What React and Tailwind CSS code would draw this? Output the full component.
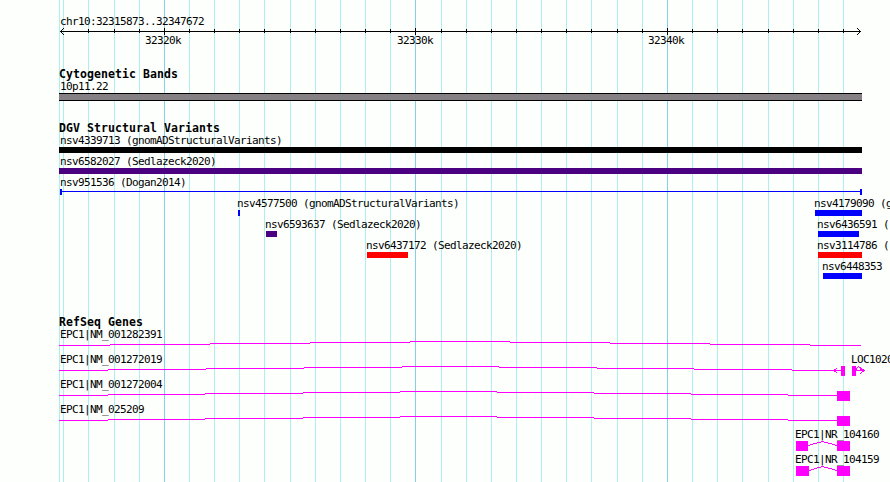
const MINOR_LINES = [
  59, 63, 88, 114, 139, 189, 214, 239, 264, 290, 315, 340, 365, 390, 441, 466, 491, 516, 541, 566, 591, 617, 642,
  692, 717, 742, 768, 793, 818, 843,
]
const MAJOR_LINES = [164, 415, 667]

const AXIS_LABELS = [
  { text: "32320k", x: 145 },
  { text: "32330k", x: 397 },
  { text: "32340k", x: 648 },
]

const VARIANT_ROWS = [
  [{ name: "nsv4339713 (gnomADStructuralVariants)", labelX: 60, x: 59, width: 803, color: "bg-black" }],
  [{ name: "nsv6582027 (Sedlazeck2020)", labelX: 60, x: 59, width: 803, color: "bg-[#4b0082]" }],
  [{ name: "nsv951536 (Dogan2014)", labelX: 60, x: 60, width: 802, span: true }],
  [
    { name: "nsv4577500 (gnomADStructuralVariants)", labelX: 237, x: 238, width: 2, color: "bg-[#0000ff]" },
    { name: "nsv4179090 (g", labelX: 814, x: 815, width: 47, color: "bg-[#0000ff]" },
  ],
  [
    { name: "nsv6593637 (Sedlazeck2020)", labelX: 265, x: 266, width: 11, color: "bg-[#4b0082]" },
    { name: "nsv6436591 (", labelX: 817, x: 818, width: 41, color: "bg-[#0000ff]" },
  ],
  [
    { name: "nsv6437172 (Sedlazeck2020)", labelX: 366, x: 367, width: 41, color: "bg-[#ff0000]" },
    { name: "nsv3114786 (", labelX: 817, x: 818, width: 44, color: "bg-[#ff0000]" },
  ],
  [{ name: "nsv6448353", labelX: 822, x: 823, width: 39, color: "bg-[#0000ff]" }],
]

// intron: x of each one pixel step along the connector
const GENE_ROWS = [
  {
    labels: [{ text: "EPC1|NM_001282391", x: 60 }],
    intron: [59, 110, 210, 310, 410, 510, 610, 710, 810, 861],
    exons: [],
  },
  {
    labels: [
      { text: "EPC1|NM_001272019", x: 60 },
      { text: "LOC1020", x: 851 },
    ],
    intron: [59, 108, 206, 304, 402, 499, 597, 694, 792, 841],
    exons: [
      [841, 4],
      [852, 4],
    ],
    arrows: true,
  },
  {
    labels: [{ text: "EPC1|NM_001272004", x: 60 }],
    intron: [59, 108, 205, 303, 400, 497, 594, 691, 788, 837],
    exons: [[837, 13]],
  },
  {
    labels: [{ text: "EPC1|NM_025209", x: 60 }],
    intron: [59, 108, 205, 303, 400, 497, 594, 691, 788, 837],
    exons: [[837, 13]],
  },
  {
    labels: [{ text: "EPC1|NR_104160", x: 795 }],
    exons: [
      [796, 12],
      [837, 13],
    ],
    hat: 808,
  },
  {
    labels: [{ text: "EPC1|NR_104159", x: 795 }],
    exons: [
      [796, 13],
      [837, 13],
    ],
    hat: 809,
  },
]

const STEP_Y = [4, 3, 2, 1, 0, 1, 2, 3, 4]

const Label = ({ x, children }) => (
  <span
    className="absolute top-0 text-[11px] leading-[13px] tracking-[-0.622px] whitespace-pre"
    style={{ left: x }}
  >
    {children}
  </span>
)

const Heading = ({ children }) => (
  <h2 className="h-3 pl-[59px] text-[11.5px] leading-[13px] font-bold tracking-[0.077px] whitespace-pre">
    {children}
  </h2>
)

const GridLines = () => (
  <div className="absolute inset-0">
    {MINOR_LINES.map((x) => (
      <div key={x} className="absolute inset-y-0 w-px bg-[#afeeee]" style={{ left: x }}></div>
    ))}
    {MAJOR_LINES.map((x) => (
      <div key={x} className="absolute inset-y-0 w-px bg-[#87ceeb]" style={{ left: x }}></div>
    ))}
  </div>
)

const Axis = () => (
  <svg className="block h-[7px] w-full" viewBox="0 0 890 7" shapeRendering="crispEdges">
    <rect x="60" y="3" width="801" height="1" />
    {MINOR_LINES.slice(2).map((x) => (
      <rect key={x} x={x} y="1" width="1" height="4" />
    ))}
    {MAJOR_LINES.map((x) => (
      <rect key={x} x={x} y="0" width="1" height="7" />
    ))}
    <path d="M63 0h1v1h-1zM62 1h1v1h-1zM61 2h1v1h-1zM61 4h1v1h-1zM62 5h1v1h-1zM63 6h1v1h-1z" />
    <path d="M857 0h1v1h-1zM858 1h1v1h-1zM859 2h1v1h-1zM859 4h1v1h-1zM858 5h1v1h-1zM857 6h1v1h-1z" />
  </svg>
)

const VariantRow = ({ items }) => (
  <div className="relative h-[21px]">
    {items.map((item) => (
      <div key={item.name}>
        <Label x={item.labelX}>{item.name}</Label>
        {item.span ? (
          <div
            className="absolute top-[13px] flex h-1.5 items-start border-x-2 border-[#0000ff]"
            style={{ left: item.x, width: item.width }}
          >
            <div className="mt-0.5 h-px w-full bg-[#0000ff]"></div>
          </div>
        ) : (
          <div
            className={`absolute top-[13px] h-1.5 ${item.color}`}
            style={{ left: item.x, width: item.width }}
          ></div>
        )}
      </div>
    ))}
  </div>
)

const GeneRow = ({ gene }) => (
  <div className="relative h-[25px]">
    <svg
      className="absolute top-[10px] left-0 h-[13px] w-[890px]"
      viewBox="0 -1 890 13"
      fill="#ff00ff"
      shapeRendering="crispEdges"
    >
      {gene.intron &&
        STEP_Y.map((y, i) => (
          <rect key={i} x={gene.intron[i]} y={y + 2} width={gene.intron[i + 1] - gene.intron[i]} height="1" />
        ))}
      {gene.exons.map(([x, width]) => (
        <rect key={x} x={x} y="2" width={width} height="10" />
      ))}
      {gene.hat && (
        <path d={`M${gene.hat} 6.5L822.5 2.5L837 6.5`} fill="none" stroke="#ff00ff" />
      )}
      {gene.arrows && (
        <path
          d="M837.5 3.5L834 6.5L837.5 9.5M834 6.5H841M856 6.5H864M860.5 3.5L864 6.5L860.5 9.5M856 5.5L858.5 2.5L862 6.5"
          fill="none"
          stroke="#ff00ff"
        />
      )}
    </svg>
    {gene.labels.map((label) => (
      <Label key={label.text} x={label.x}>
        {label.text}
      </Label>
    ))}
  </div>
)

const App = () => {
  return (
    <div className="relative h-[482px] w-[890px] overflow-hidden bg-[#fcfffc] font-['DejaVu_Sans_Mono',monospace] text-black">
      <GridLines />

      <div className="relative flex flex-col pt-[15px]">
        {/* Ruler */}
        <div className="relative h-[13px]">
          <Label x={60}>chr10:32315873..32347672</Label>
        </div>
        <Axis />
        <div className="relative -mt-px mb-[21px] h-[13px]">
          {AXIS_LABELS.map((label) => (
            <Label key={label.text} x={label.x}>
              {label.text}
            </Label>
          ))}
        </div>

        {/* Cytogenetic bands */}
        <Heading>Cytogenetic Bands</Heading>
        <div className="relative h-[13px]">
          <Label x={60}>10p11.22</Label>
        </div>
        <div className="mb-[21px] ml-[59px] h-2 w-[803px] border-y border-black bg-[#848084]"></div>

        {/* Structural variants */}
        <Heading>DGV Structural Variants</Heading>
        <div className="mb-[35px]">
          {VARIANT_ROWS.map((items) => (
            <VariantRow key={items[0].name} items={items} />
          ))}
        </div>

        {/* Genes */}
        <Heading>RefSeq Genes</Heading>
        {GENE_ROWS.map((gene) => (
          <GeneRow key={gene.labels[0].text} gene={gene} />
        ))}
      </div>
    </div>
  )
}

export default App
